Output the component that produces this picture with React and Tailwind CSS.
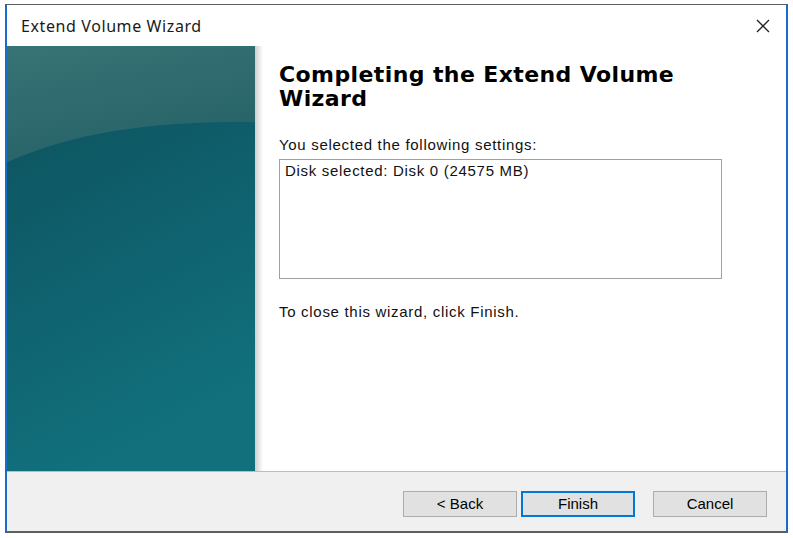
const PanelArt = () => (
    <svg className="absolute inset-0 h-full w-full" viewBox="0 0 248 424" preserveAspectRatio="none">
        <defs>
            <linearGradient id="low" x1="0" y1="0" x2="0.3" y2="1">
                <stop offset="0" stopColor="#0b5059" />
                <stop offset="0.5" stopColor="#0f5f6c" />
                <stop offset="1" stopColor="#11707c" />
            </linearGradient>
            <linearGradient id="top" x1="0" y1="0" x2="0.4" y2="1">
                <stop offset="0" stopColor="#387375" />
                <stop offset="1" stopColor="#266368" />
            </linearGradient>
        </defs>
        <rect x="0" y="0" width="248" height="424" fill="url(#low)" />
        <path d="M0 0 H248 V76 C160 74 70 84 0 116 Z" fill="url(#top)" />
    </svg>
);

const WizButton = ({ label, primary }) => (
    <button
        className={
            primary
                ? "h-[26px] w-[114px] border-2 border-[#0078d7] bg-[#e1e1e1] text-[15px] text-black"
                : "h-[26px] w-[114px] border border-[#adadad] bg-[#e1e1e1] text-[15px] text-black"
        }
    >
        {label}
    </button>
);

export default function App() {
    return (
        <div className="h-[538px] w-[793px] bg-white pl-[5px] pt-[4px] font-['Liberation_Sans',Arial,sans-serif]">
            <div className="h-[529px] w-[783px] border border-[#5d5d5d]">
                <div className="flex h-full w-full flex-col border-x border-b border-[#1b6ccf]">
                    {/* title bar */}
                    <div className="flex h-[41px] items-center justify-between bg-white pl-[14px] pr-[16px]">
                        <span className="font-['Noto_Sans',sans-serif] text-[16px] tracking-[0.6px] text-[#1a1a1a]">Extend Volume Wizard</span>
                        <svg width="14" height="14" viewBox="0 0 14 14">
                            <path d="M1 1 L13 13 M13 1 L1 13" stroke="#222" strokeWidth="1.3" fill="none" />
                        </svg>
                    </div>

                    <div className="flex flex-1">
                        <div className="relative w-[248px]">
                            <PanelArt />
                        </div>
                        <div className="w-[8px] bg-gradient-to-r from-[#cfcfcf] to-white" />
                        <div className="flex-1 bg-white pl-[16px] pt-[17px]">
                            <h1 className="font-['DejaVu_Sans',Verdana,sans-serif] text-[22px] font-bold leading-[24px] tracking-[0.4px] text-black">
                                Completing the Extend Volume
                                <br />
                                Wizard
                            </h1>
                            <p className="mt-[26px] text-[15px] leading-[16px] tracking-[0.7px] text-[#111]">You selected the following settings:</p>
                            <div className="mt-[6px] h-[120px] w-[443px] border border-[#a0a0a0] px-[5px] pt-[3px] text-[15px] leading-[16px] tracking-[0.7px] text-[#111]">
                                Disk selected: Disk 0 (24575 MB)
                            </div>
                            <p className="mt-[25px] text-[15px] leading-[16px] tracking-[0.7px] text-[#111]">To close this wizard, click Finish.</p>
                        </div>
                    </div>

                    <div className="flex h-[60px] items-start justify-end gap-[4px] border-t border-[#bcbcbc] bg-[#f0f0f0] pr-[19px] pt-[19px]">
                        <WizButton label="< Back" />
                        <WizButton label="Finish" primary />
                        <div className="w-[10px]" />
                        <WizButton label="Cancel" />
                    </div>
                </div>
            </div>
        </div>
    );
}
